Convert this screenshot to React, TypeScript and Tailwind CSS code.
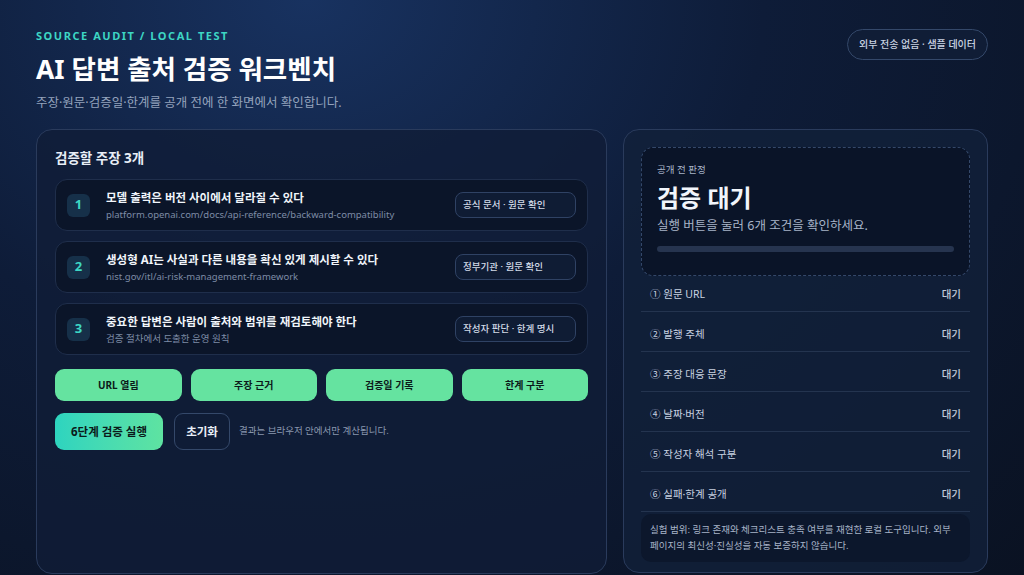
import React from 'react';

interface Claim {
  no: number;
  title: string;
  source: string;
  tag: string;
}

const claims: Claim[] = [
  {
    no: 1,
    title: '모델 출력은 버전 사이에서 달라질 수 있다',
    source: 'platform.openai.com/docs/api-reference/backward-compatibility',
    tag: '공식 문서 · 원문 확인',
  },
  {
    no: 2,
    title: '생성형 AI는 사실과 다른 내용을 확신 있게 제시할 수 있다',
    source: 'nist.gov/itl/ai-risk-management-framework',
    tag: '정부기관 · 원문 확인',
  },
  {
    no: 3,
    title: '중요한 답변은 사람이 출처와 범위를 재검토해야 한다',
    source: '검증 절차에서 도출한 운영 원칙',
    tag: '작성자 판단 · 한계 명시',
  },
];

const checks = ['URL 열림', '주장 근거', '검증일 기록', '한계 구분'];

const steps = [
  '① 원문 URL',
  '② 발행 주체',
  '③ 주장 대응 문장',
  '④ 날짜·버전',
  '⑤ 작성자 해석 구분',
  '⑥ 실패·한계 공개',
];

export default function App() {
  return (
    <div
      className="h-[575px] w-full overflow-hidden bg-[radial-gradient(ellipse_at_30%_0%,#183260_0%,#0e1c38_45%,#0a1222_100%)] px-[36px] pt-[29px] text-white"
      style={{ fontFamily: '"Noto Sans", "Noto Sans CJK KR", sans-serif' }}
    >
      {/* 헤더 */}
      <div className="flex items-start justify-between">
        <div>
          <p className="text-[11px] font-bold leading-[14px] tracking-[0.14em] text-[#3dd6c4]">
            SOURCE AUDIT / LOCAL TEST
          </p>
          <h1 className="mt-[8px] text-[26.5px] font-bold leading-[36px] text-white">AI 답변 출처 검증 워크벤치</h1>
          <p className="mt-[7px] text-[12.5px] leading-[18px] text-[#94a3bd]">
            주장·원문·검증일·한계를 공개 전에 한 화면에서 확인합니다.
          </p>
        </div>
        <div className="flex h-[31px] items-center rounded-full border border-[#34486a] bg-[#101d36] px-[11px] text-[10px] font-medium text-[#c9d3e2]">
          외부 전송 없음 · 샘플 데이터
        </div>
      </div>

      <div className="mt-[17px] flex gap-[16px]">
        {/* 왼쪽 패널 */}
        <div className="h-[445px] w-[571px] rounded-[16px] border border-[#2a3b5c] bg-[#101d37]/80 px-[18px] pt-[18px]">
          <h2 className="text-[13.5px] font-bold leading-[20px] text-[#e8eef7]">검증할 주장 3개</h2>
          <div className="mt-[11px] flex flex-col gap-[10px]">
            {claims.map((c) => (
              <div
                key={c.no}
                className="flex h-[52px] items-center rounded-[12px] border border-[#1f2e4b] bg-[#0b1529] pl-[11px] pr-[11px]"
              >
                <div className="flex h-[23px] w-[23px] items-center justify-center rounded-[6px] bg-[#163049] text-[13px] font-bold text-[#3dd6c4]">
                  {c.no}
                </div>
                <div className="ml-[16px] min-w-0 flex-1">
                  <p className="text-[11.5px] font-bold leading-[16px] text-[#f1f5fb]">{c.title}</p>
                  <p className="mt-[2px] text-[9.5px] leading-[13px] text-[#7e8ca6]">{c.source}</p>
                </div>
                <div className="flex h-[26px] w-[121px] items-center rounded-[8px] border border-[#2f4264] bg-[#0f1c34] px-[7px] text-[9.5px] font-medium text-[#d3dbe8]">
                  {c.tag}
                </div>
              </div>
            ))}
          </div>

          <div className="mt-[14px] grid grid-cols-4 gap-[9px]">
            {checks.map((label) => (
              <button
                key={label}
                className="h-[32px] rounded-[9px] bg-[#65e3a0] text-[10px] font-bold text-[#0b1a1a]"
              >
                {label}
              </button>
            ))}
          </div>

          <div className="mt-[12px] flex items-center">
            <button className="h-[37px] w-[108px] rounded-[9px] bg-gradient-to-r from-[#2dd4bf] to-[#5ee3a1] text-[11.5px] font-bold text-[#0b1a1a]">
              6단계 검증 실행
            </button>
            <button className="ml-[11px] h-[37px] w-[56px] rounded-[9px] border border-[#34486a] text-[11.5px] font-bold text-[#e8eef7]">
              초기화
            </button>
            <p className="ml-[9px] text-[9.5px] text-[#8a97ae]">결과는 브라우저 안에서만 계산됩니다.</p>
          </div>
        </div>

        {/* 오른쪽 패널 */}
        <div className="h-[444px] w-[365px] rounded-[16px] border border-[#2a3b5c] bg-[#112039]/80 px-[17px] pt-[17px]">
          <div className="h-[129px] rounded-[12px] border border-dashed border-[#34486a] bg-[#0a1428] px-[15px] pt-[15px]">
            <p className="text-[9.5px] leading-[14px] text-[#a8b4c8]">공개 전 판정</p>
            <p className="mt-[5px] text-[24px] font-bold leading-[32px] text-[#f1f5fb]">검증 대기</p>
            <p className="mt-[3px] text-[12.5px] leading-[18px] text-[#a8b4c8]">실행 버튼을 눌러 6개 조건을 확인하세요.</p>
            <div className="mt-[11px] h-[6px] rounded-full bg-[#26344f]" />
          </div>

          <div className="mt-[2px]">
            {steps.map((s) => (
              <div
                key={s}
                className="flex h-[40px] items-center justify-between border-b border-[#24344f] px-[9px] pt-[6px] text-[10.5px] first:h-[34px] first:pt-0"
              >
                <span className="text-[#c8d2e1]">{s}</span>
                <span className="font-medium text-[#c2ccdb]">대기</span>
              </div>
            ))}
          </div>

          <div className="mt-[2px] break-keep rounded-[10px] bg-[#0c172c] px-[9px] py-[8px] text-[9.5px] leading-[16px] text-[#a8b4c8]">
            실험 범위: 링크 존재와 체크리스트 충족 여부를 재현한 로컬 도구입니다. 외부 페이지의 최신성·진실성을 자동 보증하지 않습니다.
          </div>
        </div>
      </div>
    </div>
  );
}
